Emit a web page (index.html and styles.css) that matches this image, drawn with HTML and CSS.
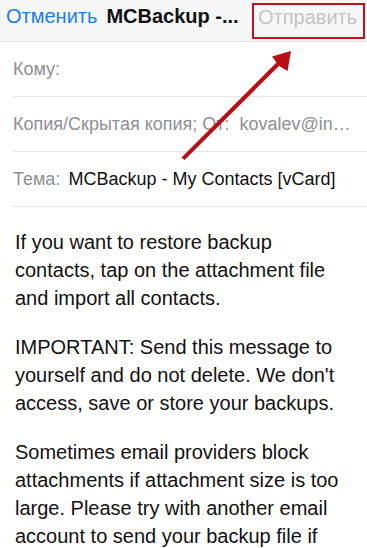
FILE: index.html
```html
<!DOCTYPE html>
<html lang="ru">
<head>
<meta charset="utf-8">
<link rel="stylesheet" href="styles.css">
</head>
<body>
<div class="screen">
  <header class="nav">
    <span class="cancel">Отменить</span>
    <span class="title">MCBackup -...</span>
    <span class="send">Отправить</span>
  </header>
  <div class="fields">
    <div class="field"><span class="label">Кому:</span></div>
    <div class="field"><span class="label">Копия/Скрытая копия; От:&nbsp; kovalev@in…</span></div>
    <div class="field"><span class="label">Тема:</span><span class="value">MCBackup - My Contacts [vCard]</span></div>
  </div>
  <div class="body">
    <p>If you want to restore backup contacts, tap on the attachment file and import all contacts.</p>
    <p>IMPORTANT: Send this message to yourself and do not delete. We don't access, save or store your backups.</p>
    <p>Sometimes email providers block attachments if attachment size is too large. Please try with another email account to send your backup file if</p>
  </div>
  <svg class="arrow" width="367" height="548" viewBox="0 0 367 548">
    <polygon points="181.5,157.5 184.5,160 279,66 287.5,71 291,51 272,56.5 276.5,62.5" fill="#b90f14"/>
  </svg>
</div>
</body>
</html>
```
FILE: styles.css
```css
html, body {
  margin: 0;
  padding: 0;
  background: #ffffff;
}
.screen {
  position: relative;
  width: 367px;
  height: 548px;
  overflow: hidden;
  font-family: "Liberation Sans", Arial, sans-serif;
}
.nav {
  height: 42px;
  background: #f7f7f7;
  border-bottom: 1px solid #e3e3e3;
  display: flex;
  align-items: center;
  padding: 0 0 8px 6px;
  box-sizing: border-box;
  font-size: 20px;
}
.cancel {
  color: #1a7cf5;
}
.title {
  margin-left: 9px;
  font-weight: bold;
  color: #111;
}
.send {
  align-self: flex-start;
  margin: 3px 2px 0 auto;
  height: 36px;
  width: 113px;
  box-sizing: border-box;
  border: 2px solid #c0131b;
  color: #c4c4c4;
  display: flex;
  align-items: center;
  padding: 0 4px 7px 4px;
}
.fields {
  padding-left: 13px;
}
.field {
  height: 55px;
  border-bottom: 1px solid #e6e6e6;
  display: flex;
  align-items: center;
  font-size: 18px;
  box-sizing: border-box;
}
.label {
  color: #8f8f94;
  white-space: nowrap;
}
.value {
  color: #111;
  margin-left: 8px;
  white-space: nowrap;
}
.body {
  padding: 21px 15px 0 15px;
  font-size: 20px;
  line-height: 28px;
  color: #111;
}
.body p {
  margin: 0 0 21px 0;
}
.arrow {
  position: absolute;
  left: 0;
  top: 0;
  pointer-events: none;
}
```
